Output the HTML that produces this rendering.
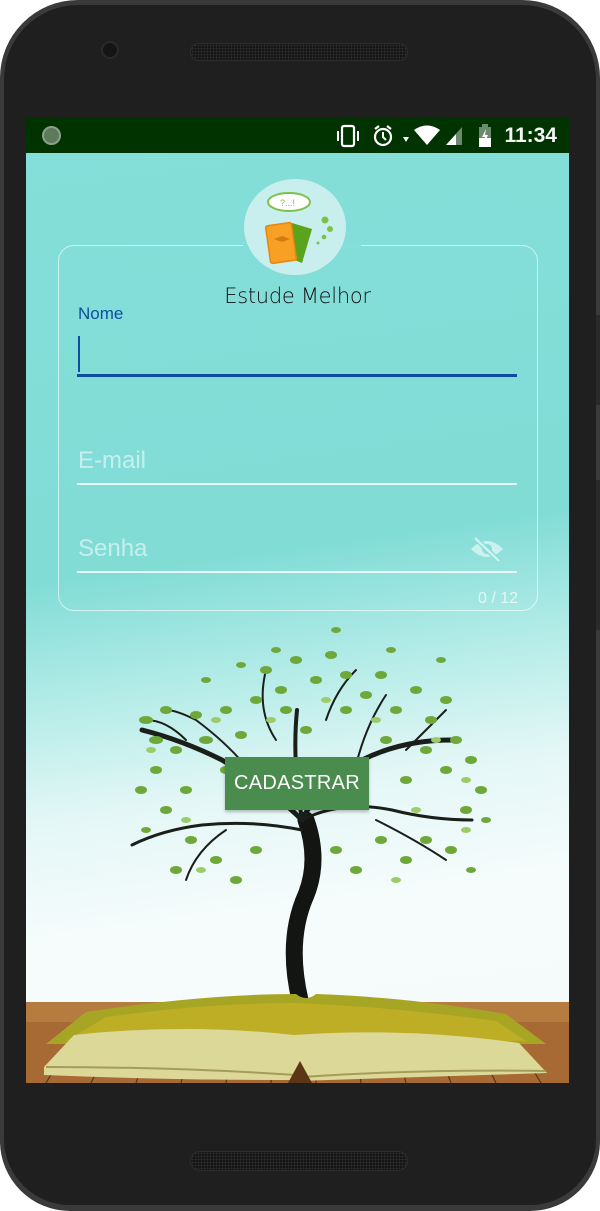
<!DOCTYPE html>
<html><head><meta charset="utf-8"><style>
*{margin:0;padding:0;box-sizing:border-box}
body{width:600px;height:1211px;background:#fff;overflow:hidden;font-family:"Liberation Sans",sans-serif;position:relative}
.phone{position:absolute;left:0;top:0;width:600px;height:1211px;background:#3a3a3a;border-radius:78px 78px 70px 70px}
.inner{position:absolute;left:4px;top:5px;width:592px;height:1200px;background:#1f1f1f;border-radius:74px 74px 66px 66px}
.spk{position:absolute;left:190px;top:43px;width:218px;height:18px;border-radius:9px;background:#151515;border:1px solid #2c2c2c;background-image:radial-gradient(#2e2e2e 0.8px,transparent 1px);background-size:3px 3px}
.cam{position:absolute;left:101px;top:41px;width:18px;height:18px;border-radius:50%;background:#151515;border:2px solid #2a2a2a}
.screen{position:absolute;left:26px;top:117px;width:543px;height:966px;overflow:hidden;
background:linear-gradient(172deg,#84ded9 0%,#82dcd6 45%,#b5ece8 57%,#e4f7f6 68%,#f6fcfc 80%,#f5fafb 92%)}
.status{position:absolute;left:0;top:0;width:543px;height:36px;background:#003300;color:#fff}
.time{position:absolute;right:12px;top:7px;font-size:21px;font-weight:bold;color:#f4f4f4}
.card{position:absolute;left:32px;top:128px;width:480px;height:366px;border:1px solid rgba(255,255,255,.6);border-radius:16px}
.gap{position:absolute;left:184px;top:-2px;width:118px;height:4px;background:#84ded9}
.logo{position:absolute;left:218px;top:62px;width:102px;height:96px;border-radius:50%;background:#c8efed}
.title{position:absolute;left:0;width:543px;top:167px;text-align:center;font-size:21px;color:#111;font-family:"DejaVu Sans",sans-serif;font-weight:300;letter-spacing:-0.3px}
.lbl{position:absolute;left:52px;top:187px;font-size:17px;color:#0d4f9e}
.cur{position:absolute;left:52px;top:219px;width:2px;height:36px;background:#0d4f9e}
.ul1{position:absolute;left:51px;top:257px;width:440px;height:3px;background:#0d4f9e}
.ph{position:absolute;left:52px;font-size:24px;color:rgba(255,255,255,.55)}
.ul{position:absolute;left:51px;width:440px;height:2px;background:rgba(255,255,255,.8)}
.cnt{position:absolute;right:51px;top:473px;font-size:16px;color:rgba(255,255,255,.7)}
.btn{position:absolute;left:199px;top:640px;width:144px;height:53px;background:#4a8c4e;color:#fff;font-size:20px;text-align:center;line-height:53px;box-shadow:0 2px 3px rgba(0,0,0,.25);letter-spacing:.3px}
.spk2{position:absolute;left:190px;top:1151px;width:218px;height:20px;border-radius:10px;background:#151515;border:1px solid #2c2c2c;background-image:radial-gradient(#2e2e2e 0.8px,transparent 1px);background-size:3px 3px}
.side{position:absolute;left:594px;width:6px;background:#2a2a2a}
</style></head><body>
<div class="phone"></div>
<div class="side" style="top:315px;height:90px"></div>
<div class="side" style="top:480px;height:150px"></div>
<div class="inner"></div>
<div class="cam"></div>
<div class="spk"></div>
<div class="spk2"></div>
<div class="screen">
 <div class="status">
  <div style="position:absolute;left:16px;top:9px;width:19px;height:19px;border-radius:50%;background:#5d7a5d;border:2px solid #8aa08a"></div>
  <svg style="position:absolute;left:310px;top:6px" width="140" height="26" viewBox="0 0 140 26" fill="#fff">
   <rect x="6" y="3" width="12" height="20" rx="2" fill="none" stroke="#fff" stroke-width="2.2"/>
   <rect x="1" y="8" width="2" height="10"/><rect x="21" y="8" width="2" height="10"/>
   <circle cx="47" cy="14" r="8" fill="none" stroke="#fff" stroke-width="2.2"/><path d="M47 9v5l3 3" stroke="#fff" stroke-width="2" fill="none"/><path d="M39 6l4-3M55 6l-4-3" stroke="#fff" stroke-width="2.2"/>
   <path d="M67 14h6l-3 5z"/>
   <path d="M78 7q13-9 26 0l-13 15z"/>
   <path d="M110 22l16-18v18z" fill="#6c8a6c"/><path d="M110 22l10-11v11z"/>
  </svg>
  <svg style="position:absolute;left:452px;top:7px" width="14" height="24" viewBox="0 0 14 24"><rect x="4" y="0" width="6" height="3" fill="#6c8a6c"/><rect x="1" y="3" width="12" height="20" fill="#6c8a6c"/><rect x="1" y="14" width="12" height="9" fill="#fff"/><path d="M8 5l-4 8h3l-1 7 4-9h-3z" fill="#fff"/></svg>
  <div class="time">11:34</div>
 </div>
 <div class="card"><div class="gap"></div></div>
 <div class="logo">
  <svg width="102" height="96" viewBox="0 0 102 96">
   <ellipse cx="45" cy="23" rx="21" ry="9" fill="#fff" stroke="#7cc24a" stroke-width="2"/>
   <text x="36" y="27" font-size="9" fill="#7cc24a" font-family="Liberation Sans">?...!</text>
   <circle cx="81" cy="41" r="3.5" fill="#7cc24a"/><circle cx="86" cy="50" r="3" fill="#7cc24a"/><circle cx="80" cy="58" r="2.3" fill="#7cc24a"/><circle cx="74" cy="64" r="1.5" fill="#7cc24a"/>
   <path d="M48 44l20 6-10 34-10-4z" fill="#5aa31c"/>
   <rect x="24" y="45" width="26" height="38" rx="2" transform="rotate(-8 37 64)" fill="#f7a024" stroke="#e58610" stroke-width="1.5"/>
   <path d="M30 60l8-3 8 3-8 3z" fill="#d07a10"/>
  </svg>
 </div>
 <div class="title">Estude Melhor</div>
 <div class="lbl">Nome</div>
 <div class="cur"></div>
 <div class="ul1"></div>
 <div class="ph" style="top:330px">E-mail</div>
 <div class="ul" style="top:366px"></div>
 <div class="ph" style="top:418px">Senha</div>
 <svg style="position:absolute;left:443px;top:418px" width="36" height="30" viewBox="0 0 36 30"><path d="M2 14q16-16 32 0q-16 16-32 0z" fill="rgba(255,255,255,.55)"/><circle cx="18" cy="14" r="5" fill="#84ded9"/><path d="M6 3l24 23" stroke="#84ded9" stroke-width="5"/><path d="M6 3l24 23" stroke="rgba(255,255,255,.6)" stroke-width="2.5"/></svg>
 <div class="ul" style="top:454px"></div>
 <div class="cnt">0 / 12</div>
 <!-- tree: coordinates are page coords -->
 <svg style="position:absolute;left:-26px;top:403px" width="600" height="563" viewBox="0 520 600 563">
  <path d="M300 1000q-14-60 6-105q14-35 0-75" fill="none" stroke="#121512" stroke-width="17" stroke-linecap="round"/>
  <g transform="translate(26,50)">
  <g fill="none" stroke="#1a1f1a" stroke-linecap="round">
   <path d="M276 770q-30-30-80-60q-40-20-80-30" stroke-width="5"/>
   <path d="M276 770q20-40 60-60q40-20 90-20" stroke-width="5"/>
   <path d="M276 770q-10-60-5-110" stroke-width="4"/>
   <path d="M276 770q40-20 90-10q40 10 80 10" stroke-width="3"/>
   <path d="M276 780q-50-10-100-5q-40 5-70 20" stroke-width="3"/>
   <path d="M230 730q-20-30-60-60q-20-10-30-10" stroke-width="2"/>
   <path d="M330 715q10-40 30-70" stroke-width="2"/>
   <path d="M250 690q-20-30-10-70" stroke-width="2"/>
   <path d="M300 670q10-30 30-50" stroke-width="2"/>
   <path d="M380 700q20-20 40-40" stroke-width="2"/>
   <path d="M160 690q-20-20-40-20" stroke-width="2"/>
   <path d="M350 770q40 20 70 40" stroke-width="2"/>
   <path d="M200 780q-30 20-40 50" stroke-width="2"/>
  </g>
  <g fill="#6fa83a">
   <ellipse cx="120" cy="670" rx="7" ry="4"/><ellipse cx="140" cy="660" rx="6" ry="4"/><ellipse cx="130" cy="690" rx="7" ry="4"/>
   <ellipse cx="150" cy="700" rx="6" ry="4"/><ellipse cx="170" cy="665" rx="6" ry="4"/><ellipse cx="180" cy="690" rx="7" ry="4"/>
   <ellipse cx="200" cy="660" rx="6" ry="4"/><ellipse cx="215" cy="685" rx="6" ry="4"/><ellipse cx="230" cy="650" rx="6" ry="4"/>
   <ellipse cx="240" cy="620" rx="6" ry="4"/><ellipse cx="255" cy="640" rx="6" ry="4"/><ellipse cx="270" cy="610" rx="6" ry="4"/>
   <ellipse cx="290" cy="630" rx="6" ry="4"/><ellipse cx="305" cy="605" rx="6" ry="4"/><ellipse cx="320" cy="625" rx="6" ry="4"/>
   <ellipse cx="340" cy="645" rx="6" ry="4"/><ellipse cx="355" cy="625" rx="6" ry="4"/><ellipse cx="370" cy="660" rx="6" ry="4"/>
   <ellipse cx="390" cy="640" rx="6" ry="4"/><ellipse cx="405" cy="670" rx="6" ry="4"/><ellipse cx="420" cy="650" rx="6" ry="4"/>
   <ellipse cx="430" cy="690" rx="6" ry="4"/><ellipse cx="445" cy="710" rx="6" ry="4"/><ellipse cx="455" cy="740" rx="6" ry="4"/>
   <ellipse cx="440" cy="760" rx="6" ry="4"/><ellipse cx="420" cy="720" rx="6" ry="4"/><ellipse cx="400" cy="700" rx="6" ry="4"/>
   <ellipse cx="380" cy="730" rx="6" ry="4"/><ellipse cx="360" cy="690" rx="6" ry="4"/><ellipse cx="400" cy="790" rx="6" ry="4"/>
   <ellipse cx="425" cy="800" rx="6" ry="4"/><ellipse cx="380" cy="810" rx="6" ry="4"/><ellipse cx="355" cy="790" rx="6" ry="4"/>
   <ellipse cx="130" cy="720" rx="6" ry="4"/><ellipse cx="115" cy="740" rx="6" ry="4"/><ellipse cx="140" cy="760" rx="6" ry="4"/>
   <ellipse cx="160" cy="740" rx="6" ry="4"/><ellipse cx="165" cy="790" rx="6" ry="4"/><ellipse cx="150" cy="820" rx="6" ry="4"/>
   <ellipse cx="190" cy="810" rx="6" ry="4"/><ellipse cx="210" cy="830" rx="6" ry="4"/><ellipse cx="230" cy="800" rx="6" ry="4"/>
   <ellipse cx="330" cy="820" rx="6" ry="4"/><ellipse cx="310" cy="800" rx="6" ry="4"/><ellipse cx="200" cy="720" rx="6" ry="4"/>
   <ellipse cx="260" cy="660" rx="6" ry="4"/><ellipse cx="280" cy="680" rx="6" ry="4"/><ellipse cx="320" cy="660" rx="6" ry="4"/>
   <ellipse cx="180" cy="630" rx="5" ry="3"/><ellipse cx="310" cy="580" rx="5" ry="3"/><ellipse cx="415" cy="610" rx="5" ry="3"/>
   <ellipse cx="250" cy="600" rx="5" ry="3"/><ellipse cx="215" cy="615" rx="5" ry="3"/><ellipse cx="365" cy="600" rx="5" ry="3"/>
   <ellipse cx="120" cy="780" rx="5" ry="3"/><ellipse cx="460" cy="770" rx="5" ry="3"/><ellipse cx="445" cy="820" rx="5" ry="3"/>
  </g>
  <g fill="#9ccb6a">
   <ellipse cx="125" cy="700" rx="5" ry="3"/><ellipse cx="190" cy="670" rx="5" ry="3"/><ellipse cx="245" cy="670" rx="5" ry="3"/>
   <ellipse cx="300" cy="650" rx="5" ry="3"/><ellipse cx="350" cy="670" rx="5" ry="3"/><ellipse cx="410" cy="690" rx="5" ry="3"/>
   <ellipse cx="440" cy="730" rx="5" ry="3"/><ellipse cx="160" cy="770" rx="5" ry="3"/><ellipse cx="390" cy="760" rx="5" ry="3"/>
   <ellipse cx="440" cy="780" rx="5" ry="3"/><ellipse cx="175" cy="820" rx="5" ry="3"/><ellipse cx="370" cy="830" rx="5" ry="3"/>
  </g>
  </g>
  <g transform="translate(26,117)">
  <rect x="0" y="885" width="543" height="81" fill="#a86a34"/>
  <g stroke="#5a3516" stroke-width="1.2"><path d="M20 966l15-25M65 966l12-25M110 966l8-25M155 966l6-25M200 966l3-25M245 966l1-25M290 966l-1-25M335 966l-3-25M380 966l-6-25M425 966l-9-25M470 966l-12-25M515 966l-15-25"/></g>
  <path d="M0 885h543v20H0z" fill="#c08848" opacity=".6"/>
  <path d="M60 895q120-18 210-18q10 8 20 0q90 3 190 20l40 30H20z" fill="#a7a624"/>
  <path d="M80 900q100-14 190-14q100 4 200 18l30 20H40z" fill="#c6b228" opacity=".7"/>
  <path d="M18 950l30-32q110-12 220 0l10 20l-10 25q-130 0-250-5z" fill="#dcd898"/>
  <path d="M268 918q110-8 225 8l28 30l-250 8l-10-25z" fill="#dcd898"/>
  <path d="M20 950q130 0 250 8M275 960q120-8 245-6" stroke="#a59c5a" stroke-width="2" fill="none"/>
  <path d="M262 966l12-22l12 22z" fill="#5a3516"/>
  </g>
 </svg>
 <div class="btn">CADASTRAR</div>
</div>
</body></html>
